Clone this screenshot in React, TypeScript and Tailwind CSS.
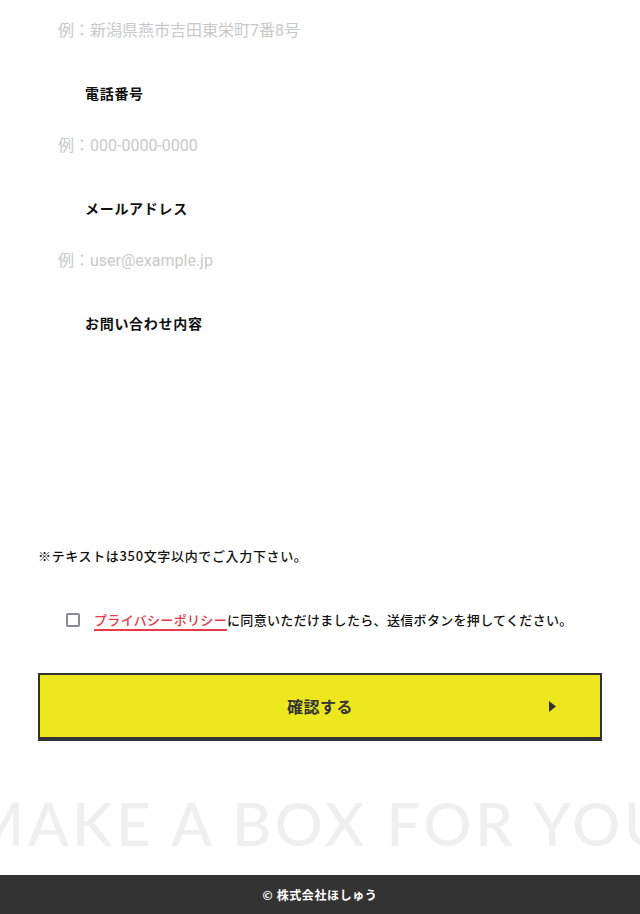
import { useState } from "react";

const jp = "font-['Noto_Sans_CJK_JP',sans-serif]";
const ph = "font-['Roboto','Noto_Sans_CJK_JP',sans-serif]";

function Field({ label, placeholder, type = "text" }: { label?: string; placeholder: string; type?: string }) {
  return (
    <div>
      {label && (
        <p className={`${jp} mt-[28px] mb-[17px] pl-[47px] text-[14px] leading-[20px] font-bold tracking-[0.05em] text-[#111]`}>
          {label}
        </p>
      )}
      <input
        type={type}
        placeholder={placeholder}
        className={`${ph} block h-[50px] w-full bg-transparent pl-[20px] text-[16px] text-[#333] outline-none placeholder:text-[#c9c9c9]`}
      />
    </div>
  );
}

export default function App() {
  const [agree, setAgree] = useState(false);

  return (
    <div className="min-h-[914px] w-full overflow-hidden bg-white">
      <div className="px-[38px] pt-[5px]">
        <Field placeholder="例：新潟県燕市吉田東栄町7番8号" />
        <Field label="電話番号" placeholder="例：000-0000-0000" type="tel" />
        <Field label="メールアドレス" placeholder="例：user@example.jp" type="email" />

        <p className={`${jp} mt-[28px] mb-[17px] pl-[47px] text-[14px] leading-[20px] font-bold tracking-[0.05em] text-[#111]`}>
          お問い合わせ内容
        </p>
        <textarea className="block h-[170px] w-full resize-none bg-transparent pl-[20px] outline-none" />

        <p className={`${jp} mt-[26px] text-[13px] leading-[20px] font-medium tracking-[0.05em] text-[#111]`}>
          ※テキストは350文字以内でご入力下さい。
        </p>

        <label className="mt-[44px] flex items-center gap-[14px] pl-[28px]">
          <input
            type="checkbox"
            checked={agree}
            onChange={(e) => setAgree(e.target.checked)}
            className="size-[14px] appearance-none rounded-[2px] border-2 border-[#8a8a92] bg-white checked:bg-[#8a8a92]"
          />
          <span className={`${jp} text-[13px] leading-[20px] font-medium tracking-[0.025em] text-[#111]`}>
            <a href="#" className="text-[#e8384a] underline decoration-[#e8384a] decoration-2 underline-offset-[4px]">
              プライバシーポリシー
            </a>
            に同意いただけましたら、送信ボタンを押してください。
          </span>
        </label>

        <button
          type="button"
          className="mt-[43px] grid h-[68px] w-full grid-cols-[1fr_auto_1fr] items-center border-x-2 border-t-2 border-b-4 border-[#333] bg-[#ece81d]"
        >
          <span />
          <span className={`${jp} text-[16px] font-bold tracking-[0.03em] text-[#333]`}>確認する</span>
          <span className="flex justify-end pr-[44px]">
            <svg width="7" height="11" viewBox="0 0 7 11">
              <path d="M0 0 L7 5.5 L0 11 Z" fill="#333" />
            </svg>
          </span>
        </button>
      </div>

      <div className="mt-[37px] flex h-[97px] justify-center overflow-hidden">
        <p className="shrink-0 whitespace-nowrap font-['Lato',sans-serif] text-[60px] leading-[90px] font-medium tracking-[0.06em] text-[#efefef]">
          MAKE A BOX FOR YOU
        </p>
      </div>

      <footer className="flex h-[40px] items-center justify-center bg-[#333]">
        <p className={`${jp} text-[12px] font-bold tracking-[0.05em] text-white`}>© 株式会社ほしゅう</p>
      </footer>
    </div>
  );
}
